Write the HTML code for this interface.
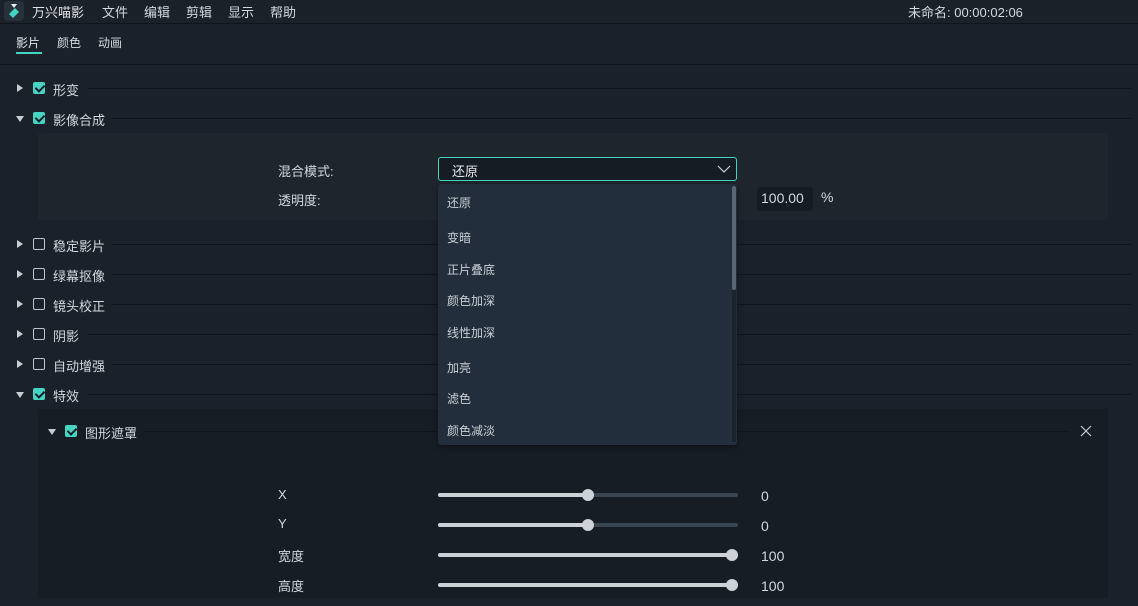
<!DOCTYPE html>
<html><head><meta charset="utf-8"><style>
*{margin:0;padding:0;box-sizing:border-box}
body{width:1138px;height:606px;overflow:hidden;background:#1b212a;font-family:"Liberation Sans","Noto Sans CJK SC",sans-serif;font-size:13px;color:#d2d8de;position:relative}
.a{position:absolute;white-space:nowrap}
.line{position:absolute;height:1px;background:#10151b}
.tri{position:absolute;width:0;height:0}
.tr{border-left:6px solid #c8cdd2;border-top:4px solid transparent;border-bottom:4px solid transparent}
.td{border-top:6px solid #c8cdd2;border-left:4px solid transparent;border-right:4px solid transparent}
.cb{position:absolute;width:12px;height:12px;border:1.5px solid #c0c6cc;border-radius:2px}
.cb.on{background:#48d4c3;border-color:#48d4c3}
.cb.on:after{content:"";position:absolute;left:2.5px;top:0px;width:4px;height:7px;border:solid #10202a;border-width:0 2px 2px 0;transform:rotate(45deg)}
.trk{position:absolute;height:4px;background:#cdd2d6;border-radius:2px}
.knob{position:absolute;width:12px;height:12px;border-radius:50%;background:#cdd2d6}
.it{position:absolute;left:9px;font-size:12px;color:#c8ced4}
</style></head><body>
<!-- header -->
<div class="a" style="left:0;top:0;width:1138px;height:23px;background:#1b2129"></div>
<div class="line" style="left:0;top:23px;width:1138px"></div>
<svg class="a" style="left:3px;top:0" width="22" height="22"><rect x="1" y="1" width="20" height="20" rx="4" fill="#26313c"/><path d="M6 14 L12 8 L16 12 L10 18Z" fill="#45d3c2"/><path d="M8 4 L14 4 L11 8Z" fill="#e8eef2"/></svg>
<div class="a" style="left:32px;top:2px;font-size:13px;color:#e0e4e8">万兴喵影</div>
<div class="a" style="left:102px;top:2px">文件</div>
<div class="a" style="left:144px;top:2px">编辑</div>
<div class="a" style="left:186px;top:2px">剪辑</div>
<div class="a" style="left:228px;top:2px">显示</div>
<div class="a" style="left:270px;top:2px">帮助</div>
<div class="a" style="left:908px;top:2px">未命名: 00:00:02:06</div>
<!-- tabs -->
<div class="a" style="left:16px;top:34px;font-size:12px;color:#e0e6ea">影片</div>
<div class="a" style="left:16px;top:52px;width:26px;height:2px;background:#45d3c2"></div>
<div class="a" style="left:57px;top:34px;font-size:12px">颜色</div>
<div class="a" style="left:98px;top:34px;font-size:12px">动画</div>
<div class="line" style="left:0;top:64px;width:1138px"></div>
<!-- sections -->
<div class="tri tr" style="left:17px;top:84px"></div><div class="cb on" style="left:33px;top:82px"></div><div class="a" style="left:53px;top:80px">形变</div><div class="line" style="left:88px;top:88px;width:1043px"></div>
<div class="tri td" style="left:16px;top:116px"></div><div class="cb on" style="left:33px;top:112px"></div><div class="a" style="left:53px;top:110px">影像合成</div><div class="line" style="left:112px;top:118px;width:1019px"></div>
<div class="a" style="left:38px;top:133px;width:1070px;height:87px;background:#1f252d;border-radius:3px"></div>
<div class="a" style="left:278px;top:161px">混合模式:</div>
<div class="a" style="left:278px;top:190px">透明度:</div>
<div class="a" style="left:438px;top:157px;width:299px;height:24px;border:1px solid #45d3c2;border-radius:3px;background:#161c23"></div>
<div class="a" style="left:452px;top:161px;color:#e4e8ec">还原</div>
<svg class="a" style="left:717px;top:164px" width="14" height="10"><path d="M1 2 L7 8 L13 2" stroke="#c8cdd2" stroke-width="1.2" fill="none"/></svg>
<div class="a" style="left:757px;top:187px;width:56px;height:24px;background:#161c23;border-radius:3px"></div>
<div class="a" style="left:761px;top:190px;font-size:14px">100.00</div>
<div class="a" style="left:821px;top:189px;font-size:14px">%</div>

<div class="tri tr" style="left:17px;top:240px"></div><div class="cb" style="left:33px;top:238px"></div><div class="a" style="left:53px;top:236px">稳定影片</div><div class="line" style="left:112px;top:244px;width:1019px"></div>
<div class="tri tr" style="left:17px;top:270px"></div><div class="cb" style="left:33px;top:268px"></div><div class="a" style="left:53px;top:266px">绿幕抠像</div><div class="line" style="left:112px;top:274px;width:1019px"></div>
<div class="tri tr" style="left:17px;top:300px"></div><div class="cb" style="left:33px;top:298px"></div><div class="a" style="left:53px;top:296px">镜头校正</div><div class="line" style="left:112px;top:304px;width:1019px"></div>
<div class="tri tr" style="left:17px;top:330px"></div><div class="cb" style="left:33px;top:328px"></div><div class="a" style="left:53px;top:326px">阴影</div><div class="line" style="left:88px;top:334px;width:1043px"></div>
<div class="tri tr" style="left:17px;top:360px"></div><div class="cb" style="left:33px;top:358px"></div><div class="a" style="left:53px;top:356px">自动增强</div><div class="line" style="left:112px;top:364px;width:1019px"></div>
<div class="tri td" style="left:16px;top:392px"></div><div class="cb on" style="left:33px;top:388px"></div><div class="a" style="left:53px;top:386px">特效</div><div class="line" style="left:88px;top:394px;width:1043px"></div>
<!-- inner panel -->
<div class="a" style="left:38px;top:409px;width:1070px;height:189px;background:#171d24"></div>
<div class="tri td" style="left:48px;top:429px"></div><div class="cb on" style="left:65px;top:425px"></div><div class="a" style="left:85px;top:423px">图形遮罩</div><div class="line" style="left:144px;top:431px;width:926px"></div>
<svg class="a" style="left:1080px;top:425px" width="12" height="12"><path d="M1 1L11 11M11 1L1 11" stroke="#c8cdd2" stroke-width="1.2"/></svg>
<div class="a" style="left:278px;top:487px">X</div>
<div class="a" style="left:278px;top:516px">Y</div>
<div class="a" style="left:278px;top:546px">宽度</div>
<div class="a" style="left:278px;top:576px">高度</div>
<div class="trk" style="left:438px;top:493px;width:300px;background:#3a4552"></div><div class="trk" style="left:438px;top:493px;width:150px"></div><div class="knob" style="left:582px;top:489px"></div>
<div class="trk" style="left:438px;top:523px;width:300px;background:#3a4552"></div><div class="trk" style="left:438px;top:523px;width:150px"></div><div class="knob" style="left:582px;top:519px"></div>
<div class="trk" style="left:438px;top:553px;width:300px"></div><div class="knob" style="left:726px;top:549px"></div>
<div class="trk" style="left:438px;top:583px;width:300px"></div><div class="knob" style="left:726px;top:579px"></div>
<div class="a" style="left:761px;top:488px;font-size:14px">0</div>
<div class="a" style="left:761px;top:518px;font-size:14px">0</div>
<div class="a" style="left:761px;top:548px;font-size:14px">100</div>
<div class="a" style="left:761px;top:578px;font-size:14px">100</div>
<!-- dropdown list -->
<div class="a" style="left:438px;top:184px;width:299px;height:261px;background:#222e3b;border-radius:3px;box-shadow:0 2px 6px rgba(0,0,0,.4)">
<div class="a" style="left:294px;top:2px;width:4px;height:256px;background:#1a232d"></div>
<div class="a" style="left:294px;top:2px;width:4px;height:104px;background:#5a6672;border-radius:2px"></div>
<div class="it" style="top:10px">还原</div>
<div class="it" style="top:45px">变暗</div>
<div class="it" style="top:77px">正片叠底</div>
<div class="it" style="top:108px">颜色加深</div>
<div class="it" style="top:140px">线性加深</div>
<div class="it" style="top:175px">加亮</div>
<div class="it" style="top:206px">滤色</div>
<div class="it" style="top:238px">颜色减淡</div>
</div>
</body></html>
